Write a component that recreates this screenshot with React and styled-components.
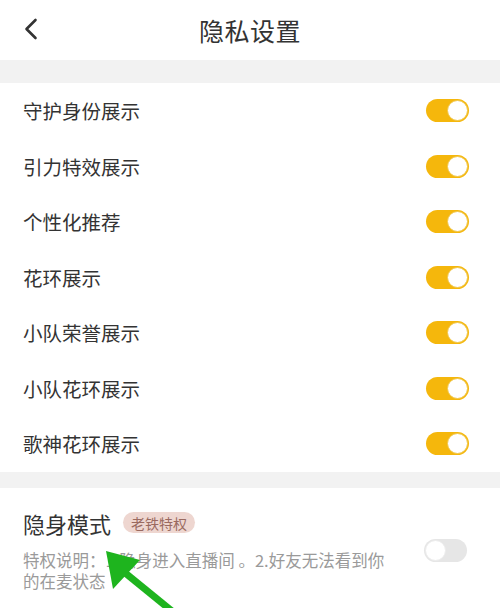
import React, { useState } from "react";
import styled, { createGlobalStyle } from "styled-components";

const GlobalStyle = createGlobalStyle`
  html, body {
    margin: 0;
    padding: 0;
    background: #ffffff;
  }
  body {
    font-family: "Noto Sans CJK SC", "Noto Sans", sans-serif;
    color: #333333;
  }
`;

const Page = styled.div`
  position: relative;
  width: 500px;
  height: 608px;
  overflow: hidden;
  background: #ffffff;
`;

const Header = styled.header`
  position: relative;
  display: flex;
  align-items: center;
  justify-content: center;
  height: 60px;
`;

const BackButton = styled.button`
  position: absolute;
  left: 18px;
  top: 14px;
  width: 26px;
  height: 30px;
  padding: 0;
  border: 0;
  background: none;
  display: flex;
  align-items: center;
  justify-content: center;
`;

const Title = styled.h1`
  margin: 0;
  font-size: 25px;
  font-weight: 400;
  color: #333333;
  letter-spacing: 0.5px;
`;

const Divider = styled.div`
  height: ${(p) => p.$h}px;
  background: #f2f2f2;
`;

const List = styled.div`
  display: flex;
  flex-direction: column;
`;

const Row = styled.div`
  display: flex;
  align-items: center;
  justify-content: space-between;
  height: 55.5px;
  padding: 0 31px 0 23px;
`;

const Label = styled.span`
  font-size: 19.5px;
  color: #333333;
`;

const Track = styled.button`
  position: relative;
  width: 43px;
  height: 23px;
  padding: 0;
  border: 0;
  border-radius: 12px;
  background: ${(p) => (p.$on ? "#f5b70c" : "#e6e6e6")};
  cursor: pointer;
  flex-shrink: 0;
`;

const Knob = styled.span`
  position: absolute;
  top: 1px;
  left: ${(p) => (p.$on ? "21px" : "1px")};
  width: 21px;
  height: 21px;
  box-sizing: border-box;
  border-radius: 50%;
  background: #ffffff;
  border: 1px solid ${(p) => (p.$on ? "#f0c64a" : "#ececec")};
`;

const Section = styled.section`
  display: flex;
  align-items: center;
  justify-content: space-between;
  padding: 21px 33px 0 23px;
`;

const SectionBody = styled.div`
  display: flex;
  flex-direction: column;
`;

const SectionHead = styled.div`
  display: flex;
  align-items: center;
  gap: 12px;
`;

const SectionTitle = styled.span`
  font-size: 22px;
  color: #333333;
  line-height: 28px;
`;

const Badge = styled.span`
  display: inline-flex;
  align-items: center;
  height: 21px;
  padding: 0 8px;
  border-radius: 11px;
  background: #eed6d0;
  color: #9a6a60;
  font-size: 14px;
`;

const Desc = styled.p`
  margin: 13px 0 0;
  width: 370px;
  font-size: 16.5px;
  line-height: 21px;
  color: #9a9a9a;
`;

const Arrow = styled.svg`
  position: absolute;
  left: 0;
  top: 0;
  pointer-events: none;
`;

function Toggle({ on, onClick }) {
  return (
    <Track $on={on} onClick={onClick}>
      <Knob $on={on} />
    </Track>
  );
}

const items = [
  "守护身份展示",
  "引力特效展示",
  "个性化推荐",
  "花环展示",
  "小队荣誉展示",
  "小队花环展示",
  "歌神花环展示",
];

export default function App() {
  const [state, setState] = useState(items.map(() => true));
  const [hidden, setHidden] = useState(false);

  return (
    <Page>
      <GlobalStyle />
      <Header>
        <BackButton>
          <svg width="14" height="22" viewBox="0 0 14 22">
            <path d="M11.5 2 L2.5 11 L11.5 20" fill="none" stroke="#333" strokeWidth="2.6" strokeLinecap="round" strokeLinejoin="round" />
          </svg>
        </BackButton>
        <Title>隐私设置</Title>
      </Header>
      <Divider $h={23} />
      <List>
        {items.map((label, i) => (
          <Row key={label}>
            <Label>{label}</Label>
            <Toggle
              on={state[i]}
              onClick={() => setState(state.map((v, j) => (j === i ? !v : v)))}
            />
          </Row>
        ))}
      </List>
      <Divider $h={16} />
      <Section>
        <SectionBody>
          <SectionHead>
            <SectionTitle>隐身模式</SectionTitle>
            <Badge>老铁特权</Badge>
          </SectionHead>
          <Desc>特权说明：1.隐身进入直播间 。2.好友无法看到你的在麦状态</Desc>
        </SectionBody>
        <Toggle on={hidden} onClick={() => setHidden(!hidden)} />
      </Section>
      <Arrow width="500" height="608" viewBox="0 0 500 608">
        <line x1="124" y1="572" x2="178" y2="616" stroke="#1eb41e" strokeWidth="7" />
        <polygon points="106,551 113,589 140,560" fill="#1eb41e" />
      </Arrow>
    </Page>
  );
}
